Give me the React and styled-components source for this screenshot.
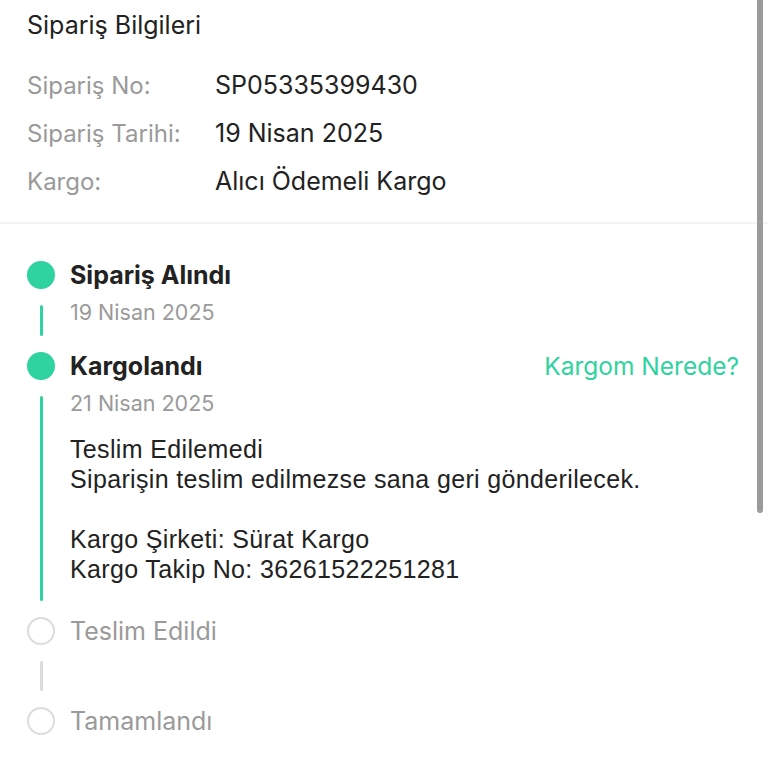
import React from "react";
import styled, { createGlobalStyle } from "styled-components";

const Global = createGlobalStyle`
  html, body { margin: 0; padding: 0; background: #fff; }
  body { font-family: Inter, "Noto Sans", sans-serif; color: #222; overflow: hidden; }
  * { box-sizing: border-box; }
`;

const Page = styled.div`
  position: relative;
  width: 768px;
  height: 768px;
  overflow: hidden;
`;

const Scrollbar = styled.div`
  position: absolute;
  right: 5px;
  top: 0;
  width: 6px;
  height: 513px;
  background: #9b9b9b;
  border-radius: 0 0 3px 3px;
`;

const InfoSection = styled.section`
  padding: 10px 27px 17px;
  border-bottom: 2px solid #f3f3f3;
`;

const SectionTitle = styled.h2`
  margin: 0 0 21px;
  font-size: 25px;
  font-weight: 400;
  line-height: 30px;
  color: #222;
`;

const InfoRow = styled.div`
  display: grid;
  grid-template-columns: 188px 1fr;
  height: 48px;
  align-items: center;
`;

const Label = styled.span`
  font-size: 24px;
  color: #9a9a9a;
`;

const Value = styled.span`
  font-size: 25px;
  color: #222;
`;

const Timeline = styled.div`
  padding: 37px 27px 0;
`;

const Step = styled.div`
  display: grid;
  grid-template-columns: 28px 1fr;
  column-gap: 15px;
`;

const Dot = styled.div`
  width: 28px;
  height: 28px;
  border-radius: 50%;
  background: ${(p) => (p.$done ? "#2fd39f" : "#fff")};
  border: ${(p) => (p.$done ? "none" : "2px solid #dcdcdc")};
`;

const Head = styled.div`
  display: flex;
  align-items: center;
  justify-content: space-between;
  height: 28px;
  padding-right: 2px;
`;

const StepTitle = styled.span`
  font-size: 25px;
  font-weight: ${(p) => (p.$done ? 700 : 400)};
  color: ${(p) => (p.$done ? "#222" : "#9a9a9a")};
`;

const Link = styled.a`
  font-size: 24.5px;
  color: #2fd39f;
  text-decoration: none;
`;

const LineCell = styled.div`
  display: flex;
  justify-content: center;
  padding: 16px 0;
`;

const Line = styled.div`
  width: 3px;
  border-radius: 2px;
  background: ${(p) => (p.$done ? "#2fd39f" : "#dcdcdc")};
`;

const Body = styled.div`
  min-height: ${(p) => p.$min || 0}px;
  padding: 8px 0 ${(p) => p.$pb || 0}px;
`;

const DateText = styled.div`
  font-size: 21.5px;
  line-height: 30px;
  color: #9a9a9a;
`;

const Note = styled.div`
  margin-top: 16px;
  font-family: "Liberation Sans", Arial, sans-serif;
  font-size: 25px;
  letter-spacing: 0.35px;
  line-height: 30px;
  color: #222;
  white-space: pre-line;
`;

export default function App() {
  return (
    <Page>
      <Global />
      <InfoSection>
        <SectionTitle>Sipariş Bilgileri</SectionTitle>
        <InfoRow>
          <Label>Sipariş No:</Label>
          <Value>SP05335399430</Value>
        </InfoRow>
        <InfoRow>
          <Label>Sipariş Tarihi:</Label>
          <Value>19 Nisan 2025</Value>
        </InfoRow>
        <InfoRow>
          <Label>Kargo:</Label>
          <Value>Alıcı Ödemeli Kargo</Value>
        </InfoRow>
      </InfoSection>

      <Timeline>
        <Step>
          <Dot $done />
          <Head>
            <StepTitle $done>Sipariş Alındı</StepTitle>
          </Head>
          <LineCell>
            <Line $done />
          </LineCell>
          <Body $pb={25}>
            <DateText>19 Nisan 2025</DateText>
          </Body>
        </Step>
        <Step>
          <Dot $done />
          <Head>
            <StepTitle $done>Kargolandı</StepTitle>
            <Link href="#">Kargom Nerede?</Link>
          </Head>
          <LineCell>
            <Line $done />
          </LineCell>
          <Body $pb={33}>
            <DateText>21 Nisan 2025</DateText>
            <Note>
              {"Teslim Edilemedi\nSiparişin teslim edilmezse sana geri gönderilecek.\n\nKargo Şirketi: Sürat Kargo\nKargo Takip No: 36261522251281"}
            </Note>
          </Body>
        </Step>
        <Step>
          <Dot />
          <Head>
            <StepTitle>Teslim Edildi</StepTitle>
          </Head>
          <LineCell>
            <Line />
          </LineCell>
          <Body $min={62} />
        </Step>
        <Step>
          <Dot />
          <Head>
            <StepTitle>Tamamlandı</StepTitle>
          </Head>
        </Step>
      </Timeline>
      <Scrollbar />
    </Page>
  );
}
